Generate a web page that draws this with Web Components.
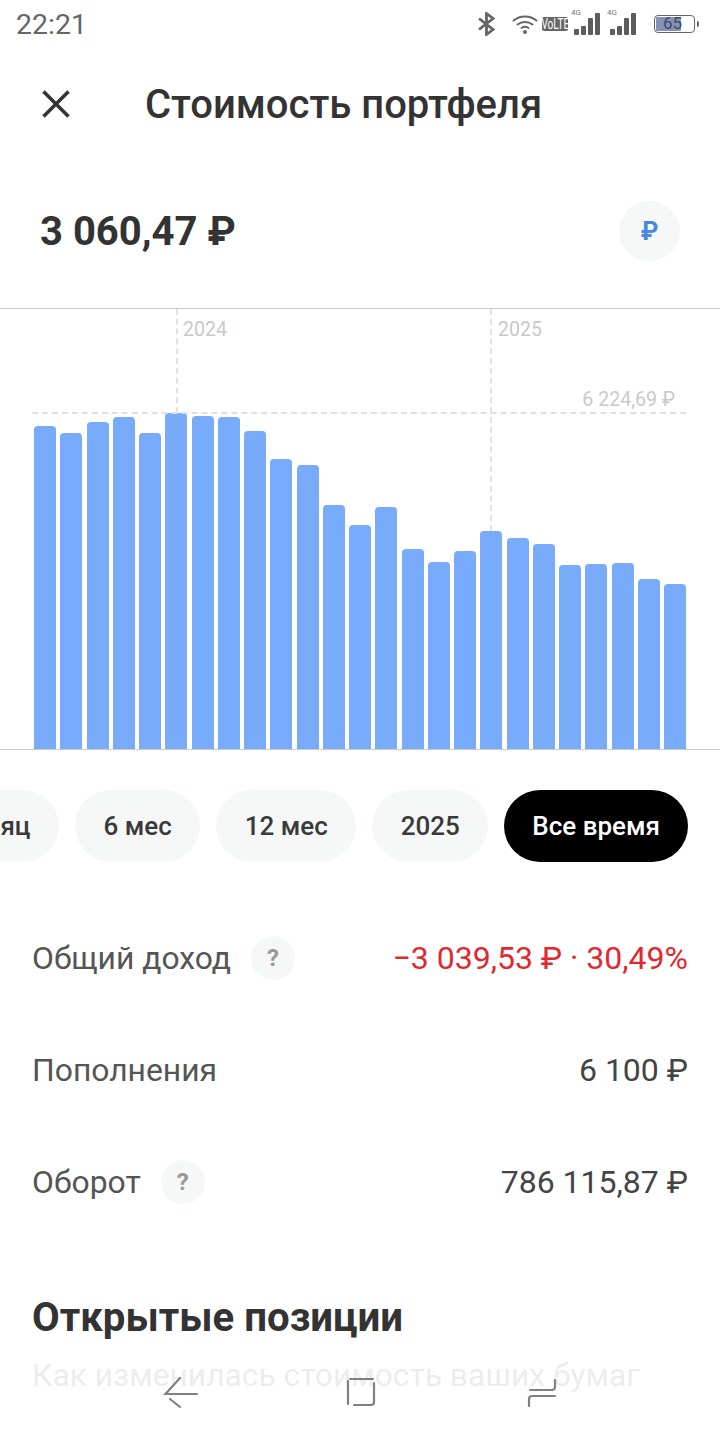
<!DOCTYPE html>
<html lang="ru">
<head>
<meta charset="utf-8">
<title>Стоимость портфеля</title>
<style>
  html, body { margin: 0; padding: 0; background: #fff; }
  body { width: 720px; height: 1440px; overflow: hidden; position: relative; font-family: Roboto, "Liberation Sans", sans-serif; color: #333; }
</style>
</head>
<body>
<status-bar></status-bar>
<top-bar>Стоимость портфеля</top-bar>
<balance-row>3 060,47 ₽</balance-row>
<bar-chart></bar-chart>
<period-chips></period-chips>
<stats-list>
  <stat-row hint><span slot="label">Общий доход</span><span style="color:#e0282e">−3 039,53 ₽ · 30,49%</span></stat-row>
  <stat-row><span slot="label">Пополнения</span>6 100 ₽</stat-row>
  <stat-row hint><span slot="label">Оборот</span>786 115,87 ₽</stat-row>
</stats-list>
<section-head title="Открытые позиции">Как изменилась стоимость ваших бумаг</section-head>
<nav-overlay></nav-overlay>

<script>
const SIGNAL_SVG = `<svg width="26" height="22" viewBox="0 0 26 22" fill="#5c5c5c"><rect x="0" y="16" width="5" height="6" rx="1"/><rect x="7" y="13" width="5" height="9" rx="1"/><rect x="14" y="5" width="5" height="17" rx="1"/><rect x="21" y="0" width="5" height="22" rx="1"/></svg>`;

class StatusBar extends HTMLElement {
  connectedCallback() {
    const shadowRoot = this.attachShadow({ mode: "open" });
    shadowRoot.innerHTML = `
    <style>
      :host { display: flex; height: 50px; align-items: center; justify-content: space-between; padding: 0 21px 0 16px; box-sizing: border-box; color: #666; }
      #time { font-size: 28.500px; line-height: 50px; }
      #icons { display: flex; align-items: center; height: 50px; padding-bottom: 2px; box-sizing: border-box; }
      svg { display: block; }
      #volte { display: flex; align-items: center; justify-content: center; background: #666; color: #fff; height: 14px; width: 26px; margin-left: 4px; border-radius: 2px; font-size: 14px; line-height: 14px; white-space: nowrap; }
      #volte span { display: block; transform: scaleX(.72); }
      .signal { position: relative; width: 26px; height: 22px; margin-left: 6px; }
      .signal + .signal { margin-left: 10px; }
      .signal b { position: absolute; left: -3px; top: -5px; font-size: 8px; font-weight: 400; line-height: 9px; color: #777; }
      #battery { position: relative; width: 41px; height: 18px; margin-left: 18px; border: 1.500px solid #666; border-radius: 4px; box-sizing: border-box; }
      #fill { position: absolute; left: 1px; top: 1px; bottom: 1px; width: 25px; background: #8492b8; border-radius: 1px; }
      #pct { position: absolute; left: 8px; top: 0; font-size: 17px; line-height: 15px; color: #3c4a6e; }
      #nub { width: 2px; height: 6px; background: #666; border-radius: 0 2px 2px 0; margin-left: 2px; }
    </style>
    <div id="time">22:21</div>
    <div id="icons">
      <svg width="17" height="24" viewBox="0 0 17 24" fill="none" stroke="#666" stroke-width="2.800"><path d="M1 6.500l14 11-6.500 5V1.500l6.500 5-14 11"/></svg>
      <svg width="26" height="20" viewBox="0 0 26 20" style="margin-left:17px" fill="none" stroke="#666" stroke-width="2" stroke-linecap="round"><path d="M1.500 6.500C8 1 18 1 24.500 6.500M5.500 10.500c4.500-3.500 10.500-3.500 15 0M9.500 14c2.200-1.600 4.800-1.600 7 0"/><circle cx="13" cy="18" r="2" fill="#666" stroke="none"/></svg>
      <div id="volte"><span>VoLTE</span></div>
      <div class="signal"><b>4G</b>${SIGNAL_SVG}</div>
      <div class="signal"><b>4G</b>${SIGNAL_SVG}</div>
      <div id="battery"><div id="fill"></div><div id="pct">65</div></div>
      <div id="nub"></div>
    </div>
    `;
  }
}
customElements.define("status-bar", StatusBar);

class TopBar extends HTMLElement {
  connectedCallback() {
    const shadowRoot = this.attachShadow({ mode: "open" });
    shadowRoot.innerHTML = `
    <style>
      :host { display: flex; align-items: center; height: 108px; padding-left: 42px; box-sizing: border-box; }
      svg { display: block; margin-right: 75px; }
      #title { font-size: 40px; font-weight: 500; color: #333; white-space: nowrap; }
    </style>
    <svg width="28" height="28" viewBox="0 0 28 28" stroke="#333" stroke-width="3.500"><path d="M1.500 1.500l25 25M26.500 1.500l-25 25"/></svg>
    <div id="title"><slot></slot></div>
    `;
  }
}
customElements.define("top-bar", TopBar);

class BalanceRow extends HTMLElement {
  connectedCallback() {
    const shadowRoot = this.attachShadow({ mode: "open" });
    shadowRoot.innerHTML = `
    <style>
      :host { display: flex; align-items: center; justify-content: space-between; height: 150px; padding: 0 40px 4px; box-sizing: border-box; }
      #sum { font-size: 40px; font-weight: 700; color: #333; white-space: nowrap; }
      #cur { width: 61px; height: 60px; border-radius: 50%; background: #f6f7f7; color: #4a8ade; font-size: 25px; font-weight: 700; display: flex; align-items: center; justify-content: center; }
    </style>
    <div id="sum"><slot></slot></div>
    <div id="cur">₽</div>
    `;
  }
}
customElements.define("balance-row", BalanceRow);

const BAR_TOPS = [426,433,422,417,433,413,416,417,431,459,465,505,525,507,549,562,551,531,538,544,565,564,563,579,584];

class BarChart extends HTMLElement {
  connectedCallback() {
    const shadowRoot = this.attachShadow({ mode: "open" });
    const bars = BAR_TOPS.map(t => `<div class="bar" style="height:${749 - t}px"></div>`).join("");
    shadowRoot.innerHTML = `
    <style>
      :host { display: block; position: relative; height: 442px; box-sizing: border-box; border-top: 1px solid #ccc; border-bottom: 1px solid #ccc; }
      #bars { display: flex; justify-content: space-between; align-items: flex-end; height: 100%; padding: 0 34px; box-sizing: border-box; }
      .bar { width: 22px; background: #78acfb; border-radius: 4px 4px 0 0; }
      .year { position: absolute; top: 9px; font-size: 19.500px; line-height: 24px; color: #c9c9c9; }
      .v { position: absolute; top: 0; width: 0; border-left: 2px dashed #e2e2e2; }
      #max-line { position: absolute; left: 32px; right: 34px; top: 103px; border-top: 2px dashed #e0e0e0; }
      #max { position: absolute; right: 45px; top: 79px; font-size: 19.600px; line-height: 24px; color: #c9c9c9; }
    </style>
    <div id="bars">${bars}</div>
    <div class="v" style="left:176px;height:104px"></div>
    <div class="v" style="left:490px;height:222px"></div>
    <div class="year" style="left:183px">2024</div>
    <div class="year" style="left:498px">2025</div>
    <div id="max-line"></div>
    <div id="max">6 224,69 ₽</div>
    `;
  }
}
customElements.define("bar-chart", BarChart);

class PeriodChips extends HTMLElement {
  connectedCallback() {
    const shadowRoot = this.attachShadow({ mode: "open" });
    const chips = ["Месяц", "6 мес", "12 мес", "2025", "Все время"];
    shadowRoot.innerHTML = `
    <style>
      :host { display: flex; justify-content: flex-end; gap: 16px; height: 72px; margin-top: 40px; padding-right: 32px; overflow: hidden; }
      .chip { flex: none; display: flex; align-items: center; padding: 0 28.500px; border-radius: 36px; background: #f6f7f7; color: #3a3a3a; font-size: 26px; font-weight: 500; white-space: nowrap; }
      .chip.on { background: #000; color: #fff; padding: 0 28px; }
    </style>
    ${chips.map((c, i) => `<div class="chip${i === 4 ? " on" : ""}">${c}</div>`).join("")}
    `;
  }
}
customElements.define("period-chips", PeriodChips);

class StatsList extends HTMLElement {
  connectedCallback() {
    const shadowRoot = this.attachShadow({ mode: "open" });
    shadowRoot.innerHTML = `
    <style>
      :host { display: block; margin-top: 40px; padding: 0 32px; }
    </style>
    <slot></slot>
    `;
  }
}
customElements.define("stats-list", StatsList);

class StatRow extends HTMLElement {
  connectedCallback() {
    const shadowRoot = this.attachShadow({ mode: "open" });
    const hint = this.hasAttribute("hint") ? `<div id="hint">?</div>` : "";
    shadowRoot.innerHTML = `
    <style>
      :host { display: flex; align-items: center; height: 112px; font-size: 31.850px; }
      #label { color: #555; white-space: nowrap; }
      #hint { width: 44px; height: 44px; margin-left: 20px; border-radius: 50%; background: #f6f7f7; color: #999; font-size: 24px; font-weight: 700; display: flex; align-items: center; justify-content: center; }
      #value { margin-left: auto; color: #444; font-size: 32px; white-space: nowrap; }
    </style>
    <div id="label"><slot name="label"></slot></div>
    ${hint}
    <div id="value"><slot></slot></div>
    `;
  }
}
customElements.define("stat-row", StatRow);

class SectionHead extends HTMLElement {
  connectedCallback() {
    const shadowRoot = this.attachShadow({ mode: "open" });
    shadowRoot.innerHTML = `
    <style>
      :host { display: block; margin-top: 56px; padding: 0 32px; }
      h2 { margin: 0; font-size: 40.200px; line-height: 48px; font-weight: 700; color: #333; white-space: nowrap; }
      p { margin: 14px 0 0; font-size: 31.750px; line-height: 40px; color: #333; white-space: nowrap; }
    </style>
    <h2>${this.getAttribute("title")}</h2>
    <p><slot></slot></p>
    `;
  }
}
customElements.define("section-head", SectionHead);

class NavOverlay extends HTMLElement {
  connectedCallback() {
    const shadowRoot = this.attachShadow({ mode: "open" });
    shadowRoot.innerHTML = `
    <style>
      :host { display: block; position: absolute; left: 0; right: 0; bottom: 0; height: 98px; background: rgba(255,255,255,.91); }
      svg { position: absolute; left: 0; top: 0; }
    </style>
    <svg width="720" height="98" viewBox="0 1342 720 98" fill="none" stroke="#808080" stroke-width="2.200" stroke-linecap="round">
      <path d="M180 1378l-14.500 16H197M170 1399l10 8"/>
      <path d="M350 1379H373M348 1381V1404M374 1383V1402q0 3-3 3H354"/>
      <path d="M530 1390H552q3 0 3-3V1380M555 1396H532q-3 0-3 3V1406"/>
    </svg>
    `;
  }
}
customElements.define("nav-overlay", NavOverlay);
</script>
</body>
</html>
